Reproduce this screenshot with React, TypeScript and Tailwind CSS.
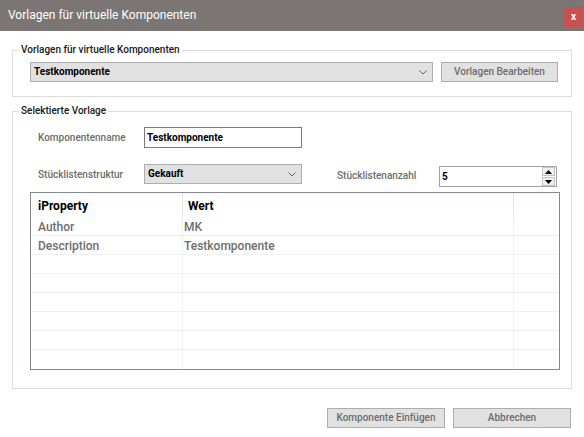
import React from 'react';

const rows = [
    { name: 'Author', value: 'MK' },
    { name: 'Description', value: 'Testkomponente' },
    { name: '', value: '' },
    { name: '', value: '' },
    { name: '', value: '' },
    { name: '', value: '' },
    { name: '', value: '' },
    { name: '', value: '' },
];

const Chevron = () => (
    <svg width="8" height="5" viewBox="0 0 8 5" className="shrink-0">
        <polyline points="0.5,0.5 4,4 7.5,0.5" fill="none" stroke="#606060" strokeWidth="1" />
    </svg>
);

const ComboBox = ({ value, width }: { value: string; width: string }) => (
    <div className={`${width} h-[20px] bg-[#e1e1e1] border border-[#adadad] flex items-center justify-between pl-[3px] pr-[5px]`}>
        <span className="text-[10px] font-bold text-black leading-none">{value}</span>
        <Chevron />
    </div>
);

const GrayButton = ({ label, width }: { label: string; width: string }) => (
    <button className={`${width} h-[20px] bg-[#e1e1e1] border border-[#adadad] flex items-center justify-center text-[10px] font-medium text-[#6d6d6d] leading-none`}>
        {label}
    </button>
);

export default function App() {
    return (
        <div className="w-[584px] h-[437px] bg-white flex flex-col font-['Roboto','Liberation_Sans',sans-serif] overflow-hidden">
            {/* Title bar */}
            <div className="h-[31px] shrink-0 bg-[#7b7574] flex items-start justify-between">
                <span className="pl-[8px] leading-[31px] text-[12px] text-white">Vorlagen für virtuelle Komponenten</span>
                <div className="mt-[7px] mr-[1px] w-[19px] h-[20px] bg-[#c75151] flex items-center justify-center text-white text-[10px] font-bold leading-none">x</div>
            </div>

            {/* Vorlagen group */}
            <fieldset className="mx-[12px] mt-[11px] border border-[#dcdcdc] pb-[14px]">
                <legend className="ml-[6px] px-[2px] text-[10px] font-medium leading-[16px] text-[#1a1a1a]">Vorlagen für virtuelle Komponenten</legend>
                <div className="mt-[4px] ml-[17px] flex gap-[8px]">
                    <ComboBox value="Testkomponente" width="w-[403px]" />
                    <GrayButton label="Vorlagen Bearbeiten" width="w-[117px]" />
                </div>
            </fieldset>

            {/* Selektierte Vorlage group */}
            <fieldset className="mx-[12px] mt-[6px] border border-[#dcdcdc] pb-[18px]">
                <legend className="ml-[6px] px-[2px] text-[10px] font-medium leading-[16px] text-[#1a1a1a]">Selektierte Vorlage</legend>

                <div className="mt-[8px] ml-[25px] flex items-center">
                    <span className="w-[106px] text-[10px] font-medium text-[#6d6d6d]">Komponentenname</span>
                    <div className="w-[158px] h-[21px] border border-[#7a7a7a] bg-white flex items-center pl-[2px]">
                        <span className="text-[10px] font-bold text-black leading-none">Testkomponente</span>
                    </div>
                </div>

                <div className="mt-[16px] ml-[25px] flex items-start">
                    <span className="w-[106px] h-[20px] flex items-center text-[10px] font-medium text-[#6d6d6d]">Stücklistenstruktur</span>
                    <ComboBox value="Gekauft" width="w-[158px]" />
                    <span className="ml-[35px] w-[102px] h-[21px] mt-[1px] flex items-center text-[10px] font-medium text-[#6d6d6d]">Stücklistenanzahl</span>
                    <div className="mt-[2px] w-[118px] h-[21px] border border-[#a3a3a3] bg-white flex items-stretch">
                        <span className="flex-1 flex items-center pl-[2px] text-[10px] font-bold text-black leading-none">5</span>
                        <div className="w-[14px] flex flex-col justify-center gap-[1px] pr-[1px]">
                            <div className="h-[9px] bg-[#f0f0f0] border border-[#c4c4c4] flex items-center justify-center">
                                <svg width="7" height="4" viewBox="0 0 7 4"><polygon points="3.5,0 7,4 0,4" fill="#000" /></svg>
                            </div>
                            <div className="h-[9px] bg-[#f0f0f0] border border-[#c4c4c4] flex items-center justify-center">
                                <svg width="7" height="4" viewBox="0 0 7 4"><polygon points="0,0 7,0 3.5,4" fill="#000" /></svg>
                            </div>
                        </div>
                    </div>
                </div>

                {/* Property table */}
                <div className="mt-[5px] ml-[17px] w-[530px] border border-[#828790] bg-white flex flex-col">
                    <div className="h-[24px] flex">
                        <div className="w-[152px] pl-[7px] pt-[1px] flex items-center border-r border-[#e3e3e3] text-[12px] font-bold text-black">iProperty</div>
                        <div className="w-[331px] pl-[5px] pt-[1px] flex items-center border-r border-[#e3e3e3] text-[12px] font-bold text-black">Wert</div>
                        <div className="flex-1" />
                    </div>
                    {rows.map((row, i) => (
                        <div key={i} className={`h-[19px] flex ${i < rows.length - 1 ? 'border-b border-[#f0f0f0]' : ''}`}>
                            <div className="w-[152px] pl-[7px] pt-[2px] flex items-center border-r border-[#f0f0f0] text-[12px] font-medium text-[#6d6d6d]">{row.name}</div>
                            <div className="w-[331px] pl-[1px] pt-[2px] flex items-center border-r border-[#f0f0f0] text-[12px] font-medium text-[#6d6d6d]">{row.value}</div>
                            <div className="flex-1" />
                        </div>
                    ))}
                </div>
            </fieldset>

            {/* Footer buttons */}
            <div className="mt-[19px] pr-[13px] flex justify-end gap-[8px]">
                <GrayButton label="Komponente Einfügen" width="w-[118px]" />
                <GrayButton label="Abbrechen" width="w-[118px]" />
            </div>
        </div>
    );
}
